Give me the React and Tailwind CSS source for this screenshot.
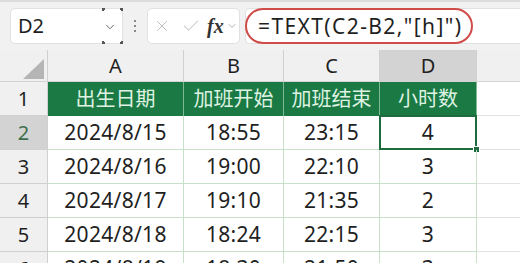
import { ChevronDown, X, Check } from 'lucide-react'

const cols = [
  { key: 'A', w: 'w-[136px]' },
  { key: 'B', w: 'w-[100px]' },
  { key: 'C', w: 'w-[96px]' },
  { key: 'D', w: 'w-[97px]' },
]

const rows = [
  ['2024/8/15', '18:55', '23:15', '4'],
  ['2024/8/16', '19:00', '22:10', '3'],
  ['2024/8/17', '19:10', '21:35', '2'],
  ['2024/8/18', '18:24', '22:15', '3'],
  ['2024/8/19', '18:30', '21:50', '3'],
]

const headers = ['出生日期', '加班开始', '加班结束', '小时数']

const font = { fontFamily: '"Noto Sans", "Noto Sans CJK SC", sans-serif' }

export default function App() {
  return (
    <div className="w-[520px] h-[263px] overflow-hidden bg-white text-[#1f1f1f]" style={font}>
      {/* Formula bar */}
      <div className="h-[50px] bg-[#f1f1f1] border-t-2 border-[#dcdcdc] flex items-center pl-[10px] gap-0">
        <div className="relative w-[113px] h-[36px] bg-white border border-[#e1e1e1] rounded-[5px] flex items-center pl-[7px]">
          <span className="text-[20px] leading-none">D2</span>
          <ChevronDown size={14} strokeWidth={1.5} className="absolute right-[5px] top-[11px] text-[#555]" />
          {/* hover corners */}
          <span className="absolute left-[91px] top-[-1px] w-[3px] h-[3px] border-l-2 border-t-2 border-[#555]" />
          <span className="absolute right-[-1px] top-[-1px] w-[3px] h-[3px] border-r-2 border-t-2 border-[#555]" />
          <span className="absolute left-[91px] bottom-[-1px] w-[3px] h-[3px] border-l-2 border-b-2 border-[#555]" />
          <span className="absolute right-[-1px] bottom-[-1px] w-[3px] h-[3px] border-r-2 border-b-2 border-[#555]" />
        </div>
        <div className="w-[24px] flex flex-col items-center gap-[3px]">
          <span className="w-[2px] h-[2px] bg-[#888]" />
          <span className="w-[2px] h-[2px] bg-[#888]" />
          <span className="w-[2px] h-[2px] bg-[#888]" />
        </div>
        <div className="w-[93px] h-[36px] bg-white border border-[#e1e1e1] rounded-[5px] flex items-center pl-[5px]">
          <X size={18} strokeWidth={1.2} className="text-[#b8b8b8]" />
          <Check size={20} strokeWidth={1.2} className="text-[#b8b8b8] ml-[10px]" />
          <span className="ml-[6px] text-[20px] italic font-semibold text-[#333]" style={{ fontFamily: '"Liberation Serif", serif' }}>fx</span>
          <ChevronDown size={12} strokeWidth={1.5} className="ml-[2px] text-[#999]" />
        </div>
        <div className="ml-[5px] flex-1 h-[36px] bg-white border border-[#e1e1e1] border-r-0 rounded-l-[5px] flex items-center">
          <div className="h-[36px] w-[228px] -ml-[1px] border-2 border-[#cf4c48] rounded-full flex items-center pl-[11px]">
            <span className="text-[21px] tracking-[1.4px] leading-none">=TEXT(C2-B2,"[h]")</span>
          </div>
        </div>
      </div>

      {/* Column headers */}
      <div className="flex h-[32px] bg-[#f0f0f0] border-b border-[#d4d4d4]">
        <div className="w-[48px] border-r border-[#d0d0d0] flex items-end justify-end pr-[3px] pb-[2px]">
          <svg width="21" height="20" viewBox="0 0 21 20">
            <polygon points="21,0 21,20 0,20" fill="#b5b5b5" />
          </svg>
        </div>
        {cols.map(c => (
          <div
            key={c.key}
            className={`${c.w} border-r border-[#d0d0d0] flex items-center justify-center text-[20px] ${c.key === 'D' ? 'bg-[#d3d3d3]' : ''}`}
          >
            {c.key}
          </div>
        ))}
        <div className="flex-1" />
      </div>

      {/* Row 1 - green header */}
      <div className="flex h-[34px]">
        <div className="w-[48px] bg-[#f0f0f0] border-r border-b border-[#d0d0d0] flex items-center justify-center text-[20px]">1</div>
        {cols.map((c, i) => (
          <div
            key={c.key}
            className={`${c.w} bg-[#1b7a43] border-r border-[#7fb994] flex items-center justify-center text-[20px] text-[#dff3e4]`}
          >
            {headers[i]}
          </div>
        ))}
        <div className="flex-1 border-b border-[#e2e2e2]" />
      </div>

      {/* Data rows */}
      {rows.map((r, ri) => {
        const selRow = ri === 0
        return (
          <div key={ri} className="flex h-[34px]">
            <div className={`w-[48px] border-r border-b border-[#d0d0d0] flex items-center justify-center text-[20px] ${selRow ? 'bg-[#d3d3d3] text-[#3c6e4c]' : 'bg-[#f0f0f0]'}`}>
              {ri + 2}
            </div>
            {cols.map((c, ci) => {
              const sel = selRow && c.key === 'D'
              return (
                <div
                  key={c.key}
                  className={`relative ${c.w} border-r border-b border-[#c8dfc8] flex items-center justify-center text-[21px] tracking-[0.3px]`}
                >
                  {r[ci]}
                  {sel && (
                    <>
                      <span className="absolute -left-[1px] -top-[1px] -right-[1px] -bottom-[1px] border-2 border-[#1e6b3d]" />
                      <span className="absolute -right-[4px] -bottom-[4px] w-[7px] h-[7px] bg-[#1e6b3d] border border-white" />
                    </>
                  )}
                </div>
              )
            })}
            <div className="flex-1 border-b border-[#e2e2e2]" />
          </div>
        )
      })}
    </div>
  )
}
